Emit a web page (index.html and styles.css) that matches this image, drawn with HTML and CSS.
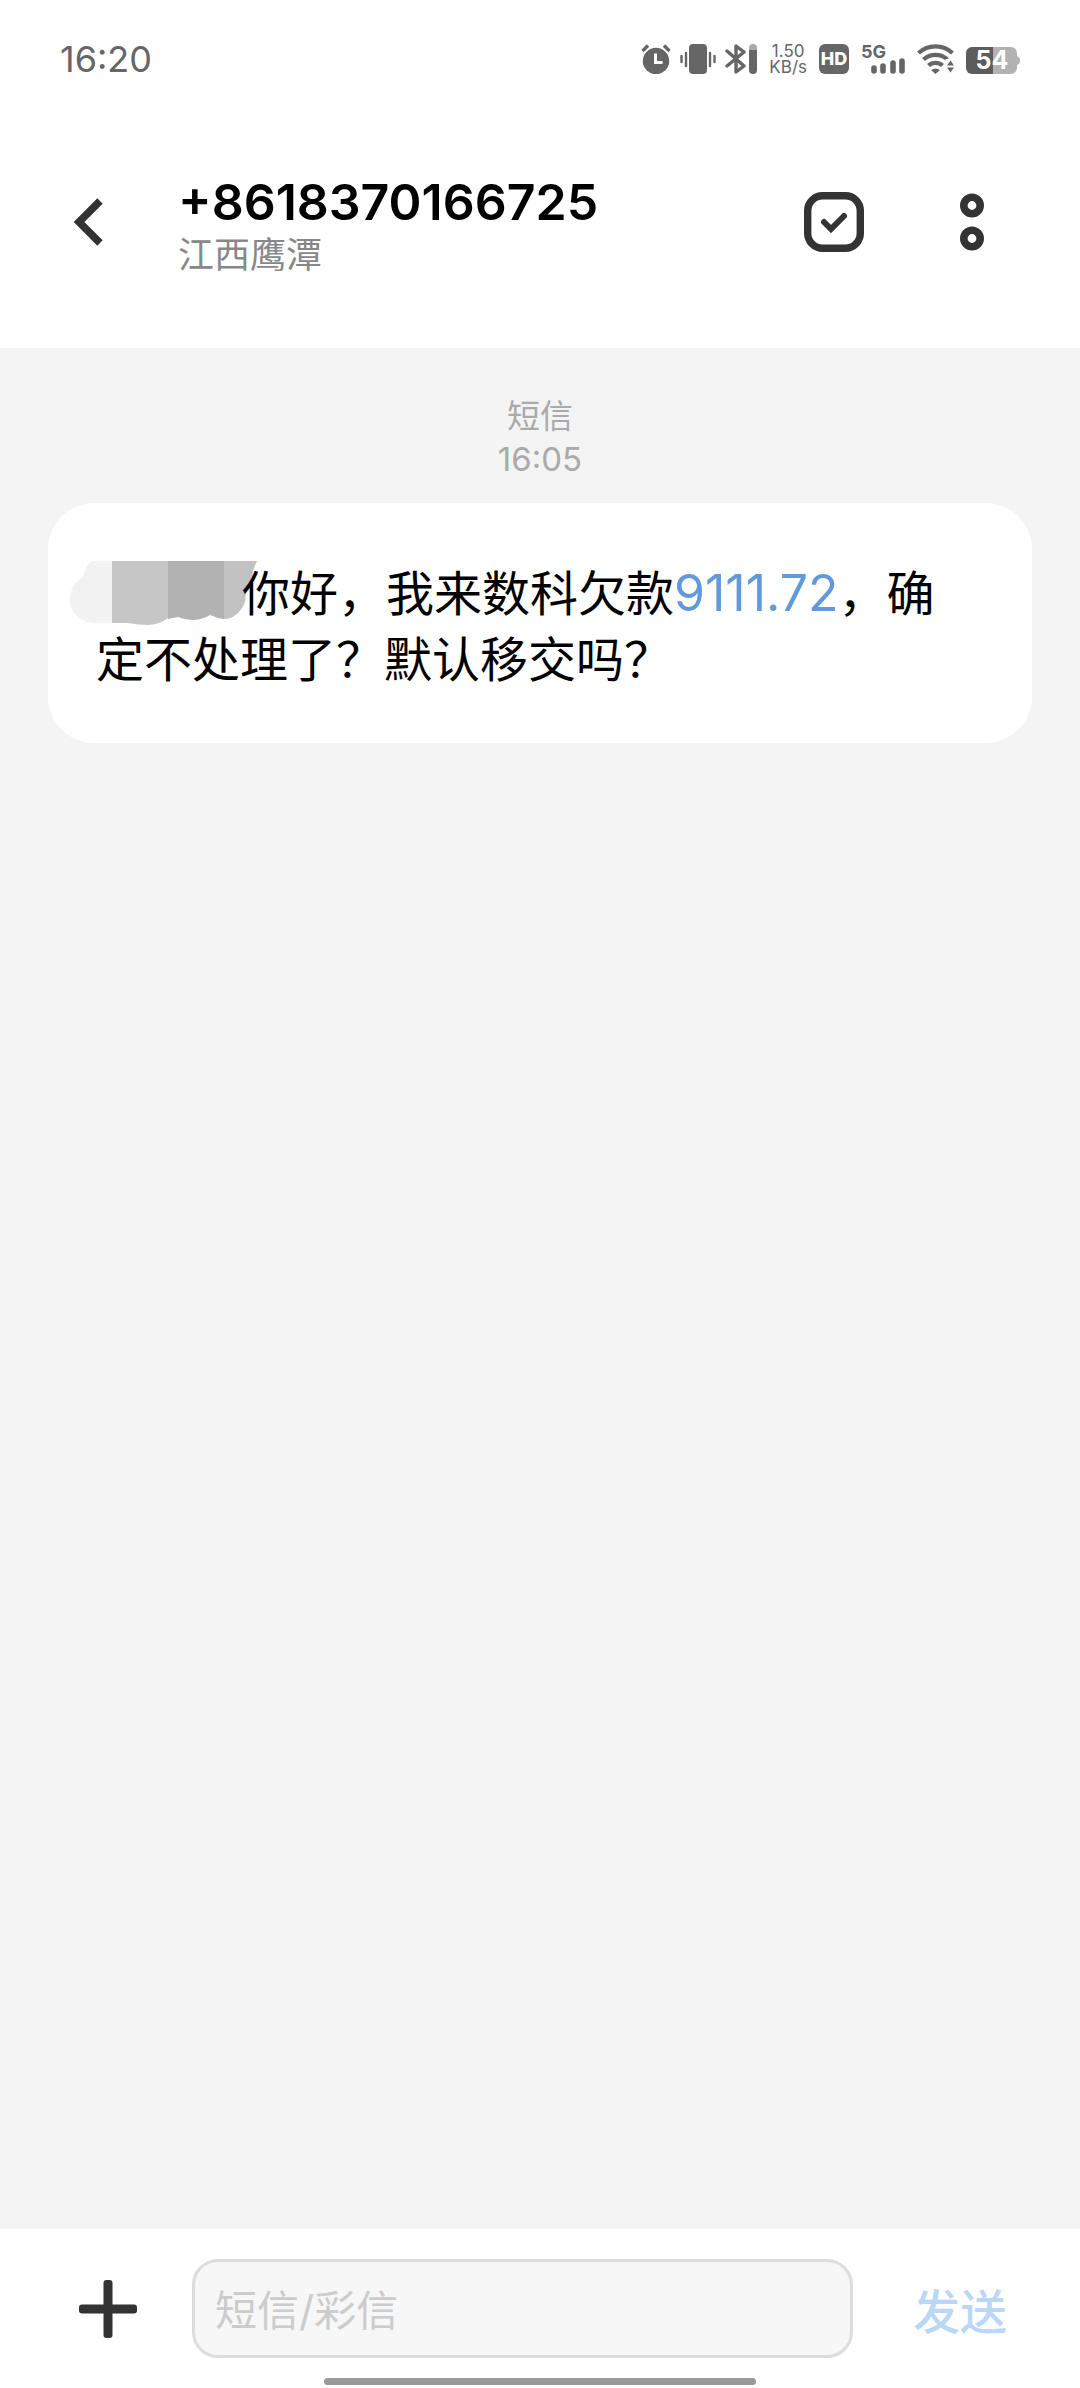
FILE: index.html
```
<!DOCTYPE html>
<html lang="zh-CN">
<head>
	<meta charset="UTF-8">
	<meta name="viewport" content="width=device-width, initial-scale=1">
	<title>短信</title>
	<link rel="stylesheet" href="styles.css">
</head>
<body>
	<div class="status">
		<span class="status__time">16:20</span>
		<div class="status__icons">
			<div class="status__group">
				<svg width="30" height="30" viewBox="0 0 30 30">
					<circle cx="15" cy="17" r="13.2" fill="#666"/>
					<path d="M1.500 7l5.500-5.500M28.500 7L23 1.500" stroke="#666" stroke-width="3.4"/>
					<path d="M14.5 9.500v9h7" fill="none" stroke="#fff" stroke-width="3"/>
				</svg>
				<svg width="36" height="30" viewBox="0 0 36 30">
					<rect x="9" y="0" width="18" height="30" rx="4" fill="#666"/>
					<path d="M1.5 12v6M6 9v13M30 9v13M34.5 12v6" stroke="#666" stroke-width="2.4" stroke-linecap="round"/>
				</svg>
				<svg width="32" height="30" viewBox="0 0 32 30">
					<path d="M2 7l17 15-8 6V2l8 6L2 22" fill="none" stroke="#666" stroke-width="3.4" stroke-linecap="round" stroke-linejoin="round"/>
					<path d="M24 6V4a4 4 0 0 1 8 0v2z" fill="#aaa"/>
					<path d="M24 6h8v20a4 4 0 0 1-8 0z" fill="#666"/>
				</svg>
			</div>
			<div class="status__speed"><span>1.50</span><span>KB/s</span></div>
			<span class="status__hd">HD</span>
			<svg class="status__signal" width="44" height="30" viewBox="0 0 44 30">
				<text class="status__net" x="0" y="14">5G</text>
				<path d="M13 24v3M22 22v5M32 19v8M41 17v10" stroke="#666" stroke-width="5.6" stroke-linecap="round"/>
			</svg>
			<svg width="37" height="30" viewBox="0 0 37 30">
				<path d="M1.5 9a25 25 0 0 1 34 0M6.500 15.500a18 18 0 0 1 24 0M11.500 21.500a10.500 10.500 0 0 1 14 0" fill="none" stroke="#666" stroke-width="4.2"/>
				<path d="M14 26q4.500-3 9 0l-4.500 4z" fill="#666"/>
				<path d="M28.500 15h9v15h-9z" fill="#fff"/>
				<path d="M30 21.500l3.500-5 3.500 5zM30 23.500h7l-3.500 5z" fill="#666"/>
			</svg>
			<svg width="54" height="30" viewBox="0 0 54 30">
				<path d="M27 3h18a6 6 0 0 1 6 6v3q3 1 3 4.500t-3 4.500v3a6 6 0 0 1-6 6H27z" fill="#b2b2b2"/>
				<path d="M27 3H6a6 6 0 0 0-6 6v15a6 6 0 0 0 6 6h21z" fill="#5c5c5c"/>
				<text class="status__level" x="26" y="25" text-anchor="middle">54</text>
			</svg>
		</div>
	</div>

	<header class="header">
		<button class="header__back" type="button" aria-label="返回">
			<svg width="30" height="48" viewBox="0 0 30 48">
				<path d="M27 3L6 24l21 21" fill="none" stroke="#333" stroke-width="7.5"/>
			</svg>
		</button>
		<div class="header__contact">
			<h1 class="header__number">+8618370166725</h1>
			<p class="header__place">江西鹰潭</p>
		</div>
		<div class="header__actions">
			<button type="button" aria-label="选择">
				<svg width="60" height="60" viewBox="0 0 60 60">
					<rect x="3.7" y="3.7" width="52.6" height="52.6" rx="15" fill="none" stroke="#333" stroke-width="7.4"/>
					<path d="M20 30l7 7 13-13" fill="none" stroke="#333" stroke-width="6" stroke-linecap="round"/>
				</svg>
			</button>
			<button type="button" aria-label="更多">
				<svg width="24" height="58" viewBox="0 0 24 58">
					<g fill="none" stroke="#333" stroke-width="7.6">
						<circle cx="12" cy="12.5" r="8.2"/>
						<circle cx="12" cy="45.5" r="8.2"/>
					</g>
				</svg>
			</button>
		</div>
	</header>

	<main class="thread">
		<div class="thread__stamp">
			<p>短信</p>
			<time>16:05</time>
		</div>
		<div class="bubble">
			<p><svg class="bubble__mask" width="188" height="64" viewBox="0 0 188 64">
				<path d="M42 0H22q-6 4-9 16Q0 24 0 39q0 12 11 19 5 4 15 4h16z" fill="#f2f2f2"/>
				<path d="M42 0h56v57q-9 7-20 7-10 0-20-2H42z" fill="#c6c6c6"/>
				<path d="M98 0h56v58q-8-1-14-4-8 5-18 5-7 0-14-3l-10 2z" fill="#b2b2b2"/>
				<path d="M154 0h33q-4 7-5 16-6 10-7 25-7 17-21 17z" fill="#c2c2c2"/>
			</svg>你好，我来数科欠款<a class="bubble__amount" href="#">9111.72</a>，确定不处理了？默认移交吗？</p>
		</div>
	</main>

	<footer class="footer">
		<form class="composer">
			<button class="composer__add" type="button" aria-label="添加">
				<svg width="58" height="58" viewBox="0 0 58 58" fill="#333">
					<rect x="24.5" y="0" width="9" height="58" rx="3"/>
					<rect x="0" y="24.5" width="58" height="9" rx="3"/>
				</svg>
			</button>
			<input class="composer__text" type="text" placeholder="短信/彩信" aria-label="短信/彩信">
			<button class="composer__send" type="button">发送</button>
		</form>
		<div class="footer__home"></div>
	</footer>
</body>
</html>
```
FILE: styles.css
```
* {
	box-sizing: border-box;
}
body {
	margin: 0;
	min-height: 100vh;
	display: flex;
	flex-direction: column;
	background-color: #fff;
	color: #000;
	font-family: Inter, "Noto Sans CJK SC", sans-serif;
}
h1, p {
	margin: 0;
}
button {
	padding: 0;
	border: 0;
	background: none;
	font-family: inherit;
	cursor: pointer;
}
svg {
	display: block;
}

.status {
	display: flex;
	justify-content: space-between;
	align-items: center;
	height: 118px;
	padding: 0 60px;
	color: #666;
}
.status__time {
	font-size: 36px;
}
.status__icons {
	display: flex;
	align-items: center;
	gap: 12px;
}
.status__group {
	display: flex;
	gap: 9px;
}
.status__speed {
	display: flex;
	flex-direction: column;
	font-size: 17px;
	line-height: 16px;
	text-align: center;
}
.status__hd {
	width: 30px;
	border-radius: 6px;
	background-color: #666;
	color: #fff;
	font-size: 18px;
	font-weight: 800;
	line-height: 30px;
	text-align: center;
}
.status__signal {
	overflow: visible;
}
.status__net {
	fill: #666;
	font-size: 18px;
	font-weight: 700;
}
.status__level {
	fill: #fff;
	font-size: 25px;
	font-weight: 700;
}

.header {
	display: flex;
	align-items: center;
	height: 230px;
	padding: 0 96px 22px 73px;
}
.header__back {
	margin-right: 75px;
}
.header__contact {
	flex: 1;
	padding-top: 8px;
}
.header__number {
	font-size: 50px;
	font-weight: 600;
	line-height: 58px;
}
.header__place {
	color: #888;
	font-size: 36px;
	line-height: 48px;
}
.header__actions {
	display: flex;
	align-items: center;
	gap: 96px;
}

.thread {
	flex: 1;
	padding: 47px 48px;
	background-color: #f4f4f4;
}
.thread__stamp {
	margin-bottom: 22px;
	color: #aaa;
	font-size: 33px;
	line-height: 43px;
	text-align: center;
}
.bubble {
	padding: 57px 90px 50px 48px;
	border-radius: 46px;
	background-color: #fff;
	font-size: 48px;
	line-height: 66px;
}
.bubble__mask {
	display: inline-block;
	margin: -8px -16px -8px -26px;
	vertical-align: -6px;
}
.bubble__amount {
	color: #6199db;
	font-size: 50px;
	text-decoration: none;
}

.footer {
	padding: 30px 0 3px;
}
.composer {
	display: flex;
	align-items: center;
	padding: 0 73px 0 79px;
}
.composer__text {
	flex: 1;
	min-width: 0;
	height: 99px;
	margin: 0 60px 0 55px;
	padding: 4px 20px 0;
	border: 3px solid #ddd;
	border-radius: 26px;
	background-color: #f7f7f7;
	font-family: inherit;
	font-size: 42px;
}
.composer__text::placeholder {
	color: #ccc;
	opacity: 1;
}
.composer__send {
	color: #bbd7f8;
	font-size: 47px;
	font-weight: 500;
}
.footer__home {
	width: 40%;
	height: 7px;
	margin: 20px auto 0;
	border-radius: 4px;
	background-color: #999;
}
```
